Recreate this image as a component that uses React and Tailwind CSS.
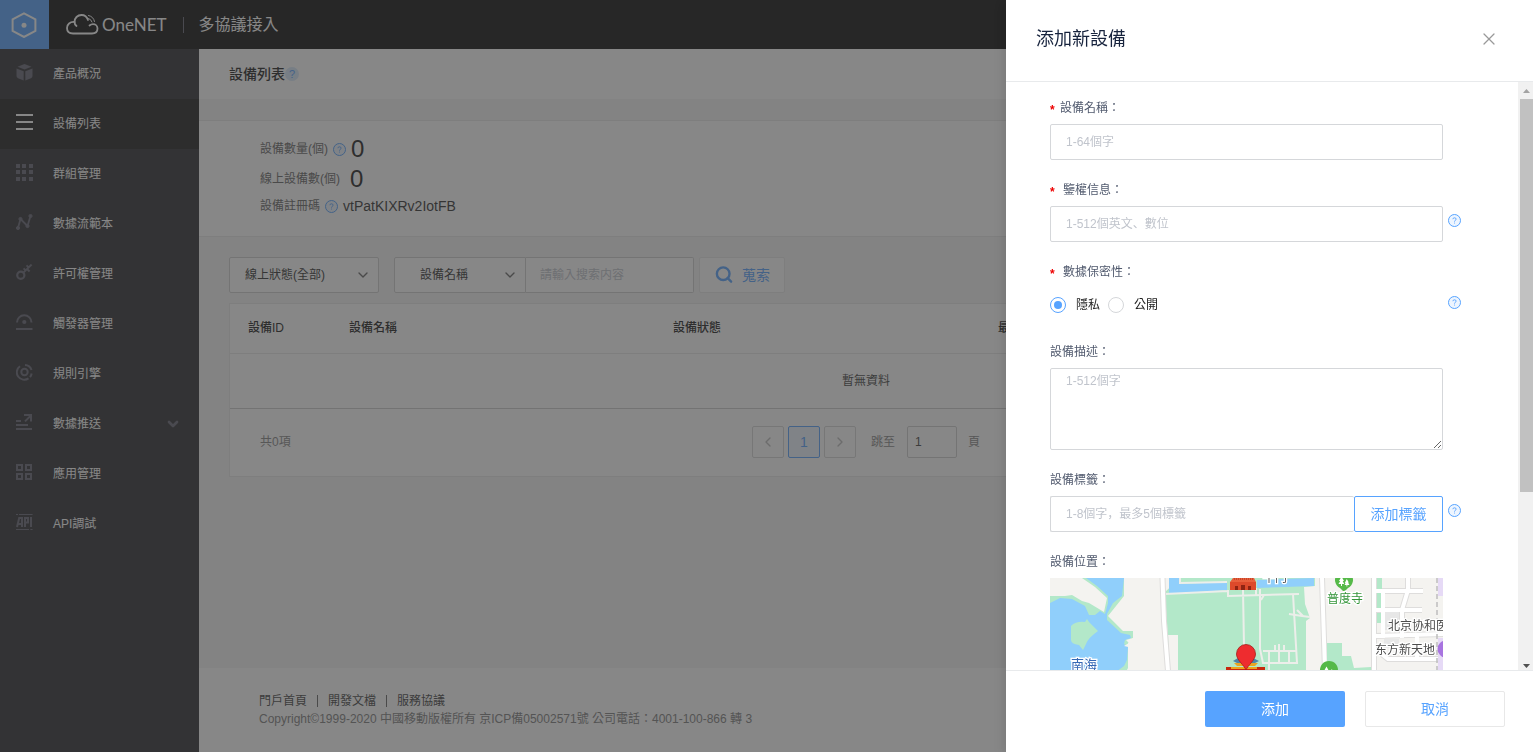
import { useState } from "react";
import { ChevronDown, ChevronLeft, ChevronRight, Search, X } from "lucide-react";

// 側欄圖示，統一畫在 17 寬的網格上
const icons = {
  product: (
    <g fill="currentColor">
      <path d="M8.5 0 15.5 2.8 8.5 5.6 1.5 2.8Z" />
      <path d="M.5 4.4 7.7 7.2V16.4L2 14.2Q.5 13.6.5 12Z" />
      <path d="M16.5 4.4 9.3 7.2V16.4L15 14.2Q16.5 13.6 16.5 12Z" />
    </g>
  ),
  list: (
    <g fill="currentColor">
      <rect x="0" y="0" width="17" height="2" />
      <rect x="0" y="7" width="17" height="2" />
      <rect x="0" y="14" width="17" height="2" />
    </g>
  ),
  group: (
    <g fill="currentColor">
      {[0, 6, 13].map((y) => [0, 6, 13].map((x) => <rect key={`${x}-${y}`} x={x} y={y} width="4" height="4" />))}
    </g>
  ),
  stream: (
    <g fill="currentColor" stroke="currentColor">
      <path d="M2 14 4.5 5 11.5 12 14.5 2" fill="none" strokeWidth="1.8" />
      <circle cx="2" cy="14" r="1.6" />
      <circle cx="4.5" cy="5" r="1.6" />
      <circle cx="11.5" cy="12" r="1.6" />
      <circle cx="14.5" cy="2" r="1.6" />
    </g>
  ),
  key: (
    <g fill="none" stroke="currentColor" strokeWidth="2.2">
      <circle cx="4.8" cy="11.2" r="3.6" />
      <path d="M7.6 8.4 15.6.6M11 5 13.6 7.4M7.6 4.4 9.6 6.4M10.5 1.4 12.6 3.4" strokeWidth="2" />
    </g>
  ),
  trigger: (
    <g fill="none" stroke="currentColor" strokeWidth="2">
      <path d="M1 8.500A7.2 7.2 0 0 1 15.5 8.500" />
      <path d="M0 15H16.500" />
      <circle cx="8.3" cy="8" r="2.1" fill="currentColor" stroke="none" />
    </g>
  ),
  rule: (
    <g fill="none" stroke="currentColor" strokeWidth="2">
      <circle cx="8.5" cy="8" r="3.2" />
      <path d="M4 2.2A7.3 7.3 0 0 0 12.5 14.4" />
      <path d="M9 1A7.3 7.3 0 0 1 15.5 6" />
      <path d="M15.6 9.5A7.3 7.3 0 0 1 14 13.2" />
    </g>
  ),
  push: (
    <g fill="none" stroke="currentColor" strokeWidth="2">
      <path d="M0 7H5M0 11H12M0 15H16" />
      <path d="M8 1H15V7.600M15.2 1.2 9 7.4" />
    </g>
  ),
  app: (
    <g fill="none" stroke="currentColor" strokeWidth="2">
      <rect x="1" y="1" width="5" height="5" />
      <rect x="10" y="1" width="5" height="5" />
      <rect x="1" y="10" width="5" height="5" />
      <rect x="10" y="10" width="5" height="5" />
    </g>
  ),
  api: (
    <g fill="none" stroke="currentColor" strokeWidth="2">
      <path d="M0 .5H2M3 .5H16.6M0 15.5H13M14.4 15.500H16.6" strokeWidth="1" />
      <path d="M1 13 3.2 4H6V13M2 10H6M9 13V4H12V8.500H9M15 3V13" />
    </g>
  ),
};

const menu = [
  { icon: "product", label: "產品概況" },
  { icon: "list", label: "設備列表", active: true },
  { icon: "group", label: "群組管理" },
  { icon: "stream", label: "數據流範本" },
  { icon: "key", label: "許可權管理" },
  { icon: "trigger", label: "觸發器管理" },
  { icon: "rule", label: "規則引擎" },
  { icon: "push", label: "數據推送", children: true },
  { icon: "app", label: "應用管理" },
  { icon: "api", label: "API調試" },
];

const columns = [
  { label: "設備ID", width: "w-[101px]" },
  { label: "設備名稱", width: "w-[324px]" },
  { label: "設備狀態", width: "w-[325px]" },
  { label: "最後上線時間", width: "w-[325px]" },
  { label: "操作", width: "" },
];

function HelpIcon({ className = "" }) {
  return (
    <svg viewBox="0 0 13 13" className={`w-[13px] h-[13px] shrink-0 ${className}`} fill="none" stroke="#57a3ff">
      <circle cx="6.5" cy="6.5" r="6" fill="#edf5ff" />
      <path d="M4.9 5.2Q4.9 3.8 6.5 3.8T8.100 5.1Q8.100 5.900 7.2 6.4 6.5 6.8 6.5 7.700M6.5 8.6V9.500" strokeWidth=".9" />
    </svg>
  );
}

function Header() {
  return (
    <header className="flex items-center h-[49px] bg-[#0f0f0f] text-white">
      <a href="#home" aria-label="首頁" className="flex items-center justify-center w-[49px] h-[49px] pr-[2px] bg-[#57a3ff]">
        <svg viewBox="0 0 26 26" className="w-[26px] h-[26px]" fill="none" stroke="currentColor" strokeWidth="2">
          <path d="M13 1.4 24.4 7.4V19L13 25 1.6 19V7.4Z" />
          <circle cx="13" cy="13.2" r="2.5" fill="currentColor" stroke="none" />
        </svg>
      </a>
      <svg viewBox="0 0 33 21" className="w-[33px] h-[21px] ml-[17px]" fill="none" stroke="currentColor" strokeWidth="1.8" strokeLinecap="round">
        <path d="M22 6C21 3 18.500 1 15.500 1 11.500 1 8.500 4 8.500 8 4 7.500 1 10.500 1 14 1 17.500 3.500 19.500 7 19.500H26C29.500 19.500 31.500 17.500 31.500 14.500 31.500 12 29.500 10.200 27 10.200 25.500 10.200 24.500 10.700 23.500 11.500" />
        <path d="M8.500 8Q8.500 10.500 10.500 12" />
        <path d="M22.500 1.500Q27.500 2.500 28.500 7.500M22.500 4.500Q25 5 26 8" strokeWidth="1" />
      </svg>
      <span className="ml-[3px] text-[17px] font-['Lato',sans-serif]">OneNET</span>
      <span className="ml-4 w-px h-4 bg-[#666675]"></span>
      <span className="ml-[15px] text-base">多協議接入</span>
    </header>
  );
}

function Sidebar() {
  return (
    <nav className="w-[199px] shrink-0 bg-[#2f2f33]">
      {menu.map((item) => (
        <a
          key={item.label}
          href={`#${item.icon}`}
          className={`flex items-center h-[50px] pl-4 pr-[18px] text-xs text-white ${item.active ? "bg-[#202020]" : ""}`}
        >
          <svg viewBox="0 0 17 20" className={`w-[17px] h-5 mr-5 ${item.active ? "text-white" : "text-[#666675]"}`}>
            {icons[item.icon]}
          </svg>
          {item.label}
          {item.children && <ChevronDown className="w-4 h-4 ml-auto text-[#666675]" strokeWidth={4} />}
        </a>
      ))}
    </nav>
  );
}

function Stats() {
  return (
    <section className="mt-[21px] pl-[61px] pt-[13px] pb-[18px] border-y border-[#e8e8e8] bg-white text-xs text-[#666]">
      <div className="flex items-center h-[30px] gap-[5px]">
        <span>設備數量(個)</span>
        <HelpIcon />
        <span className="text-2xl text-[#222]">0</span>
      </div>
      <div className="flex items-center h-[30px] gap-[10px]">
        <span>線上設備數(個)</span>
        <span className="text-2xl text-[#222]">0</span>
      </div>
      <div className="flex items-center h-6 gap-[5px]">
        <span>設備註冊碼</span>
        <HelpIcon />
        <span className="text-sm text-[#333]">vtPatKIXRv2IotFB</span>
      </div>
    </section>
  );
}

function FilterBar() {
  return (
    <div className="flex items-center text-xs text-[#333]">
      <div className="relative w-[150px] mr-[15px]">
        <select aria-label="線上狀態" className="appearance-none w-full h-9 pl-[15px] border border-[#d0d0d0] rounded-xs bg-white">
          <option>線上狀態(全部)</option>
        </select>
        <ChevronDown className="absolute right-2 top-[10px] w-4 h-4 text-[#666] pointer-events-none" strokeWidth={2} />
      </div>
      <div className="relative w-[132px]">
        <select aria-label="搜索欄位" className="appearance-none w-full h-9 pl-[25px] border border-[#d0d0d0] rounded-l-xs bg-white">
          <option>設備名稱</option>
        </select>
        <ChevronDown className="absolute right-2 top-[10px] w-4 h-4 text-[#666] pointer-events-none" strokeWidth={2} />
      </div>
      <input
        aria-label="搜索內容"
        placeholder="請輸入搜索内容"
        className="w-[168px] h-9 px-[14px] border border-l-0 border-[#d0d0d0] rounded-r-xs bg-white placeholder:text-[#c0c4cc]"
      />
      <button className="flex items-center h-9 ml-[5px] px-[14px] gap-2 border border-[#e8e8e8] rounded-xs bg-white text-sm text-[#57a3ff]">
        <Search className="w-5 h-5 pb-px" strokeWidth={3} />
        蒐索
      </button>
    </div>
  );
}

function Pagination() {
  const square = "flex items-center justify-center w-8 h-8 border rounded-xs";
  return (
    <div className="grid grid-cols-[1fr_auto_1fr] items-center h-[67px] px-[30px] text-xs text-[#888]">
      <span>共0項</span>
      <div className="flex items-center">
        <button aria-label="上一頁" className={`${square} border-[#d8d8d8] text-[#bbb]`}>
          <ChevronLeft className="w-4 h-4" />
        </button>
        <button className={`${square} mx-1 border-[#57a3ff] bg-[#edf5ff] text-sm text-[#57a3ff]`}>1</button>
        <button aria-label="下一頁" className={`${square} border-[#d8d8d8] text-[#bbb]`}>
          <ChevronRight className="w-4 h-4" />
        </button>
        <label htmlFor="page" className="ml-[15px] mr-3">跳至</label>
        <input id="page" defaultValue="1" className="w-[50px] h-8 px-[7px] border border-[#d0d0d0] rounded-xs text-xs text-[#444]" />
        <span className="ml-[11px]">頁</span>
      </div>
    </div>
  );
}

function DeviceTable() {
  return (
    <div className="mt-[10px] border border-[#e8e8e8] bg-white text-xs">
      <table className="w-full table-fixed">
        <thead>
          <tr className="h-[49px] border-b border-[#e8e8e8] text-[#222]">
            {columns.map((col) => (
              <th key={col.label} className={`${col.width} pl-[18px] text-left font-medium`}>{col.label}</th>
            ))}
          </tr>
        </thead>
        <tbody>
          <tr className="h-[55px] border-b border-[#ccc] text-[#444]">
            <td colSpan={columns.length} className="text-center">暫無資料</td>
          </tr>
        </tbody>
      </table>
      <Pagination />
    </div>
  );
}

function Footer() {
  return (
    <footer className="mt-auto py-6 pl-[60px] bg-white text-xs leading-[18px]">
      <div className="flex items-center text-[#444]">
        <a href="#portal">門戶首頁</a>
        <span className="w-px h-3 mx-[10px] bg-[#666]"></span>
        <a href="#docs">開發文檔</a>
        <span className="w-px h-3 mx-[10px] bg-[#666]"></span>
        <a href="#terms">服務協議</a>
      </div>
      <p className="text-[#808080]">Copyright©1999-2020 中國移動版權所有 京ICP備05002571號 公司電話：4001-100-866 轉 3</p>
    </footer>
  );
}

function Field({ id, label, required, help, children }) {
  return (
    <div className="mb-5">
      <label htmlFor={id} className="flex items-center h-5 mb-[6px] text-[#515a6e]">
        {required && <span className={`pt-1 text-[#ed0000] font-bold ${help ? "w-[13px]" : "w-[10px]"}`}>*</span>}
        {label}：
      </label>
      <div className="flex gap-[5px]">
        <div className="flex-1 min-w-0">{children}</div>
        <div className="w-[13px] pt-2">{help && <HelpIcon />}</div>
      </div>
    </div>
  );
}

function TreePin({ x, y }) {
  return (
    <g transform={`translate(${x} ${y})`}>
      <path d="M0 11 -4 7A9 9 0 1 1 4 7Z" fill="#55b948" />
      <path d="M-2.500-4.500-5 0H-3.800L-5.500 3H.2L-1.300 0H0ZM2.800-2 .8 2H1.600L.5 4H5.500L4 1.500H4.800ZM-3 3V5H-2V3ZM2.500 4V5.500H3.300V4Z" fill="#fff" />
    </g>
  );
}

function LocationMap() {
  return (
    <svg
      viewBox="0 0 393 200"
      preserveAspectRatio="xMidYMin slice"
      role="img"
      aria-label="設備位置地圖"
      className="w-full h-[200px] font-['Noto_Sans_CJK_SC',sans-serif]"
      fontSize="12"
    >
      <rect width="393" height="200" fill="#f4f3f0" />

      {/* 南海 */}
      <path d="M0 18 15 18 22 17 32 23 39 25 54 34 57 20 45 9 32 0H74V18L58 38 73 53H83V60L78 65V90L67 110V200H0Z" fill="#b3e8c9" />
      <path d="M36 0H74L72 18 63 25 57 36 57 42 71 55 80 57 81 60 75 62 74 66 78 69 77 82 74 88 66 94V200H0V25L10 20 22 21 35 28 39 37 45 37 50 33 55 36 58 25 58 18 47 8Z" fill="#90cffb" />
      <path d="M83 60 76 62 79 65 74 68 83 70Z" fill="#f4f3f0" />
      <path d="M21 48Q26 43 35 44L37 41 39 44 48 53Q38 60 36 66L33 72 29 67Q21 66 21 62Z" fill="#b3e8c9" />

      {/* 故宮 */}
      <path d="M115 14 130 0H265V8L254 9 255 26 260 40 256 43V200H120V93Z" fill="#b3e8c9" />
      <path d="M118 57H128V93H120Z" fill="#f4f3f0" />
      <path d="M119 0H130V6L177 4V12L119 16Z M207 2 264 0V8L207 10Z" fill="#90cffb" />
      <g fill="none" stroke="#eceeea" strokeWidth="2">
        <path d="M130 0V5L177 4M115 16 178 13M178 12V18L249 16M193 12 194 68M206 10V18" />
        <path d="M210 11V71L213 85H247L243 16M213 73H247" />
        <path d="M219 73V93M225 67V73M229 66V85M234 67V73M239 73V85" />
        <path d="M239 36 252 38 260 39M247 32 253 38M214 17 211 22" />
      </g>

      {/* 道路 */}
      <g fill="none" stroke="#dedddc" strokeWidth="6">
        <path d="M112.500 0 114 43 118 93 121 200M272 0 275 93V200M324 0V200" />
        <path d="M324 13H373M324 32H372M358 0V12L352 32V60M324 58 393 56M333 71V77L338 81H393" />
      </g>
      <path d="M327 0H332V30H327ZM327 35H331V45H327Z" fill="#b3e8c9" />
      <path d="M334 34H349V52H334ZM334 61H349V70H334Z" fill="#e7e7e7" />
      <g fill="none" stroke="#fff" strokeWidth="4">
        <path d="M112.500 0 114 43 118 93 121 200M272 0 275 93V200M324 0V200" />
        <path d="M324 13H373M324 32H372M358 0V12L352 32V60M324 58 393 56M333 71V77L338 81H393M333 13V60M367 57V81" />
      </g>
      <path d="M277 65H292V78H301L304 90 321 89V200H277Z" fill="#b3e8c9" />
      <path d="M388 0H393V18H388ZM388 60H393V93H388Z" fill="#e6daf6" />
      <path d="M387 0V93" stroke="#bdbdbd" strokeWidth="1.500" strokeDasharray="5 3" />
      <circle cx="396" cy="71" r="8.500" fill="#a874e0" />

      {/* 午門 */}
      <path d="M183 0H204L206 4H180Z" fill="#e8603c" />
      <path d="M180 4H206V12H180Z" fill="#dd4a2b" />
      <path d="M184 1H203" stroke="#a82c16" strokeDasharray="1 1" />
      <path d="M185 8H188V12H185ZM191 7H195V12H191ZM198 8H201V12H198Z" fill="#8f2412" />

      {/* 天安門 */}
      <path d="M176 89H215V95H176Z" fill="#c8280f" />
      <path d="M181 89H207V91H181Z" fill="#eda41c" />
      <path d="M188 80H203L209 83 205 85H187L183 83Z" fill="#4c86a8" />
      <path d="M184 85H208L205 88H187Z" fill="#e8a723" />

      <TreePin x={294} y={3} />
      <TreePin x={279} y={93} />
      <path d="M196 92C194 87 186.500 82 186.500 76A9.500 9.500 0 0 1 205.500 76C205.500 82 198 87 196 92Z" fill="#ee2c2f" stroke="#a61c16" strokeWidth=".8" />

      <g stroke="#fff" strokeWidth="2.500" paintOrder="stroke">
        <text x="21" y="91" fontSize="13" fill="#3568b5">南海</text>
        <text x="213" y="4" fill="#555">午门</text>
        <text x="277" y="25" fill="#35953a">普度寺</text>
        <text x="338" y="52" fill="#4d4d4d">北京协和医院</text>
        <text x="325" y="76" fill="#4d4d4d">东方新天地</text>
      </g>
    </svg>
  );
}

// 原生滾動條在各瀏覽器不一致，這裡自己畫
function ScrollBar() {
  return (
    <div aria-hidden="true" className="flex flex-col w-[15px] shrink-0 bg-[#f1f1f1]">
      <svg viewBox="0 0 15 17" className="w-[15px] h-[17px]"><path d="M5 11H12L8.500 7Z" fill="#a3a3a3" /></svg>
      <div className="flex-1">
        <div className="h-[71%] ml-[2px] bg-[#c1c1c1]"></div>
      </div>
      <svg viewBox="0 0 15 17" className="w-[15px] h-[17px]"><path d="M5 11H12L8.500 15Z" fill="#505050" /></svg>
    </div>
  );
}

function DeviceDrawer() {
  const [privacy, setPrivacy] = useState("private");
  // 佔位文字的標點靠左下，用 SC 字形
  const box =
    "block w-full px-[15px] border border-[#d5d7da] rounded-xs font-['Liberation_Sans','Noto_Sans_CJK_SC',sans-serif] placeholder:text-[#c0c4cc]";
  const radio =
    "appearance-none w-4 h-4 rounded-full border border-[#d5d7da] bg-clip-content p-[3px] checked:border-[#57a3ff] checked:bg-[#57a3ff]";

  return (
    <aside role="dialog" aria-label="添加新設備" className="fixed inset-y-0 right-0 flex flex-col w-[527px] bg-white text-xs shadow-[0_4px_12px_rgba(0,0,0,0.15)]">
      <div className="flex items-center justify-between h-[82px] pb-[3px] pl-[30px] pr-[34px] border-b border-[#e8eaec]">
        <h2 className="text-lg text-[#17233d]">添加新設備</h2>
        <button aria-label="關閉" className="text-[#999]">
          <X className="w-5 h-5" strokeWidth={1.5} />
        </button>
      </div>

      <div className="flex flex-1 min-h-0">
        <div className="flex-1 pt-4 pl-11 pr-[57px] overflow-y-auto [scrollbar-width:none]">
          <Field id="name" label="設備名稱" required>
            <input id="name" placeholder="1-64個字" className={`${box} h-9`} />
          </Field>
          <Field id="auth" label="鑒權信息" required help>
            <input id="auth" placeholder="1-512個英文、數位" className={`${box} h-9`} />
          </Field>
          <Field id="private" label="數據保密性" required help>
            <div className="flex items-center h-[34px] text-[#222]">
              <input id="private" type="radio" name="privacy" className={radio} checked={privacy === "private"} onChange={() => setPrivacy("private")} />
              <label htmlFor="private" className="ml-[10px] mr-2">隱私</label>
              <input id="public" type="radio" name="privacy" className={radio} checked={privacy === "public"} onChange={() => setPrivacy("public")} />
              <label htmlFor="public" className="ml-[10px]">公開</label>
            </div>
          </Field>
          <Field id="desc" label="設備描述">
            <textarea id="desc" placeholder="1-512個字" className={`${box} h-[82px] py-1 resize-y`} />
          </Field>
          <Field id="tag" label="設備標籤" help>
            <div className="flex">
              <input id="tag" placeholder="1-8個字，最多5個標籤" className={`${box} flex-1 min-w-0 h-9 border-r-0`} />
              <button className="w-[89px] h-9 border border-[#57a3ff] rounded-xs text-sm text-[#57a3ff]">添加標籤</button>
            </div>
          </Field>
          <Field label="設備位置">
            <LocationMap />
          </Field>
        </div>
        <ScrollBar />
      </div>

      <div className="flex justify-end gap-5 h-[82px] pt-5 pr-7 border-t border-[#e8eaec] text-sm">
        <button className="w-[140px] h-9 rounded-xs bg-[#57a3ff] text-white">添加</button>
        <button className="w-[140px] h-9 rounded-xs border border-[#e8e8e8] text-[#57a3ff]">取消</button>
      </div>
    </aside>
  );
}

function App() {
  return (
    <div className="flex flex-col min-h-screen font-['Liberation_Sans','Noto_Sans_CJK_TC',sans-serif]">
      <Header />
      <div className="flex flex-1">
        <Sidebar />
        <main className="flex flex-col flex-1 min-w-0 bg-[#f4f4f4]">
          <div className="flex items-center h-[50px] pl-[30px] bg-white">
            <h1 className="text-sm font-medium text-[#222]">設備列表</h1>
            <span className="flex items-center justify-center w-[14px] h-[14px] rounded-full bg-[#d8e8fb] text-[11px] text-[#57a3ff]">?</span>
          </div>
          <Stats />
          <div className="pt-5 px-[30px]">
            <FilterBar />
            <DeviceTable />
          </div>
          <Footer />
        </main>
      </div>
      <div className="fixed inset-0 bg-[rgba(55,55,55,0.6)]"></div>
      <DeviceDrawer />
    </div>
  );
}

export default App;
